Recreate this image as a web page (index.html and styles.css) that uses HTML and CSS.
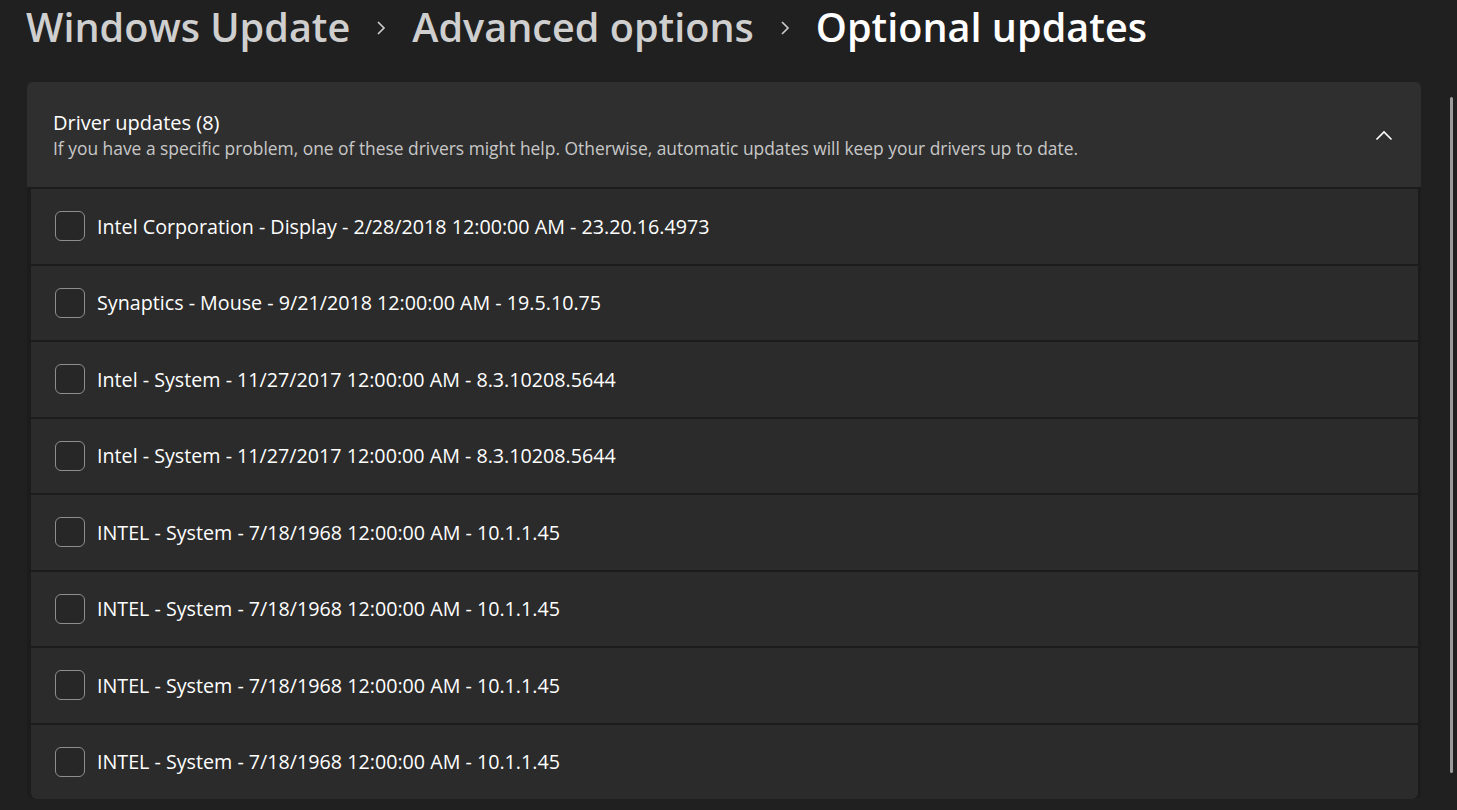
FILE: index.html
```html
<!DOCTYPE html>
<html lang="en">
<head>
    <meta charset="UTF-8">
    <title>Optional updates</title>
    <link rel="stylesheet" href="styles.css">
</head>
<body>
    <!-- Breadcrumb -->
    <div class="breadcrumb">
        <span class="crumb">Windows Update</span>
        <svg class="crumb-sep" width="12" height="16" viewBox="0 0 12 16"><path d="M3 2 L9 8 L3 14" fill="none" stroke="#cfcfcf" stroke-width="1.6"/></svg>
        <span class="crumb">Advanced options</span>
        <svg class="crumb-sep" width="12" height="16" viewBox="0 0 12 16"><path d="M3 2 L9 8 L3 14" fill="none" stroke="#cfcfcf" stroke-width="1.6"/></svg>
        <span class="crumb current">Optional updates</span>
    </div>

    <div class="page">
        <div class="expander">
            <div class="expander-header">
                <div class="header-text">
                    <div class="header-title">Driver updates (8)</div>
                    <div class="header-desc">If you have a specific problem, one of these drivers might help. Otherwise, automatic updates will keep your drivers up to date.</div>
                </div>
                <svg class="chevron" width="18" height="12" viewBox="0 0 18 12"><path d="M1.5 9.5 L9 2 L16.5 9.5" fill="none" stroke="#ffffff" stroke-width="1.6"/></svg>
            </div>
            <div class="expander-body" id="driverList">
                <!-- rows inserted below -->
            </div>
        </div>
        <div class="scrollbar"></div>
    </div>

    <script>
        const drivers = [
            'Intel Corporation - Display - 2/28/2018 12:00:00 AM - 23.20.16.4973',
            'Synaptics - Mouse - 9/21/2018 12:00:00 AM - 19.5.10.75',
            'Intel - System - 11/27/2017 12:00:00 AM - 8.3.10208.5644',
            'Intel - System - 11/27/2017 12:00:00 AM - 8.3.10208.5644',
            'INTEL - System - 7/18/1968 12:00:00 AM - 10.1.1.45',
            'INTEL - System - 7/18/1968 12:00:00 AM - 10.1.1.45',
            'INTEL - System - 7/18/1968 12:00:00 AM - 10.1.1.45',
            'INTEL - System - 7/18/1968 12:00:00 AM - 10.1.1.45'
        ];

        const list = document.getElementById('driverList');
        drivers.forEach(name => {
            const row = document.createElement('label');
            row.className = 'driver-row';
            row.innerHTML = `<span class="checkbox"></span><span class="driver-name">${name}</span>`;
            list.appendChild(row);
        });
    </script>
</body>
</html>
```

FILE: styles.css
```css
body {
    margin: 0;
    background: #202020;
    color: white;
    font-family: "Open Sans", "Noto Sans", sans-serif;
    overflow: hidden;
}
.breadcrumb {
    display: flex;
    align-items: center;
    height: 54px;
    padding-left: 26px;
    gap: 25px;
}
.crumb {
    font-size: 39.6px;
    font-weight: 600;
    color: #cfcfcf;
    line-height: 54px;
}
.crumb.current {
    color: #ffffff;
}
.crumb-sep {
    margin-top: 2px;
}
.page {
    display: flex;
    padding: 28px 0 0 27px;
}
.expander {
    width: 1394px;
}
.expander-header {
    display: flex;
    align-items: center;
    justify-content: space-between;
    height: 105px;
    padding: 0 28px 0 26px;
    background: #2f2f2f;
    border-radius: 6px 6px 0 0;
    box-sizing: border-box;
}
.header-title {
    font-size: 20px;
    line-height: 26px;
    margin-top: 1px;
}
.header-desc {
    font-size: 17.4px;
    color: #c8c8c8;
    line-height: 24px;
}
.chevron {
    margin-top: 2px;
}
.expander-body {
    display: flex;
    flex-direction: column;
    gap: 2px;
    padding: 2px 3px 0 4px;
    background: #1c1c1c;
    border-radius: 0 0 6px 6px;
}
.driver-row {
    display: flex;
    align-items: center;
    height: 74.5px;
    padding-left: 24px;
    background: #2b2b2b;
}
.driver-row:last-child {
    border-radius: 0 0 6px 6px;
}
.checkbox {
    width: 28px;
    height: 28px;
    border: 1.5px solid #8e8e8e;
    border-radius: 6px;
    background: #272727;
    margin-right: 12px;
    flex-shrink: 0;
}
.driver-name {
    font-size: 19.7px;
}
.scrollbar {
    width: 3px;
    height: 676px;
    margin: 15px 0 0 29px;
    background: #9b9b9b;
    border-radius: 2px;
}
```
